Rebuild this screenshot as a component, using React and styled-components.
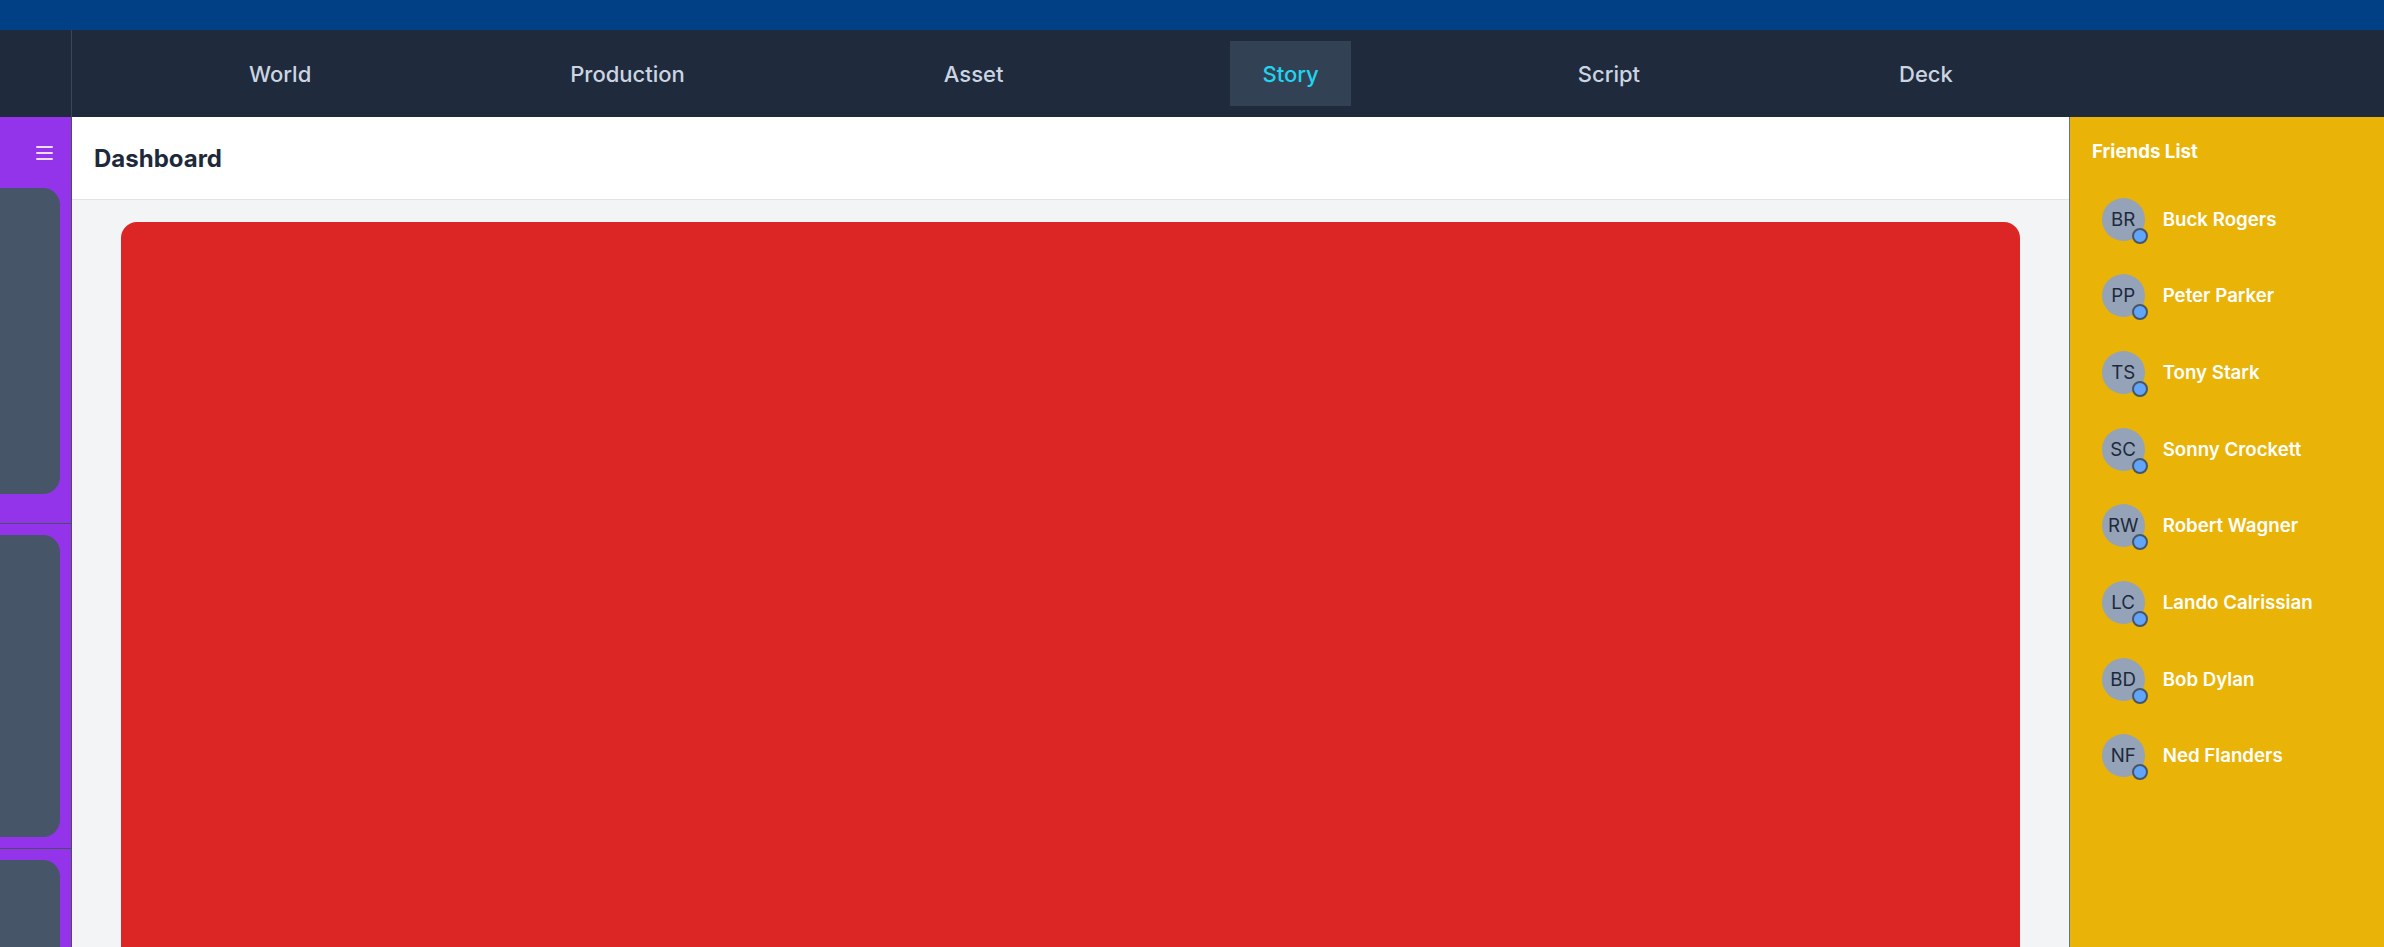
import styled, { createGlobalStyle } from "styled-components";

const GlobalStyle = createGlobalStyle`
  html, body {
    margin: 0;
    padding: 0;
    height: 100%;
  }
  body {
    font-family: Inter, "Noto Sans", "Liberation Sans", sans-serif;
    overflow: hidden;
  }
  #root {
    height: 100%;
  }
  * {
    box-sizing: border-box;
  }
`;

const tabs = ["World", "Production", "Asset", "Story", "Script", "Deck"];

const friends = [
  { initials: "BR", name: "Buck Rogers" },
  { initials: "PP", name: "Peter Parker" },
  { initials: "TS", name: "Tony Stark" },
  { initials: "SC", name: "Sonny Crockett" },
  { initials: "RW", name: "Robert Wagner" },
  { initials: "LC", name: "Lando Calrissian" },
  { initials: "BD", name: "Bob Dylan" },
  { initials: "NF", name: "Ned Flanders" },
];

const App = () => {
  return (
    <>
      <GlobalStyle />
      <Page>
        <TopStrip />
        <NavBar>
          <NavCorner />
          <NavLinks>
            {tabs.map((t) => (
              <NavLink key={t} $active={t === "Story"}>
                {t}
              </NavLink>
            ))}
          </NavLinks>
        </NavBar>
        <Body>
          <Sidebar>
            <SidebarHead>
              <MenuIcon width="17" height="14" viewBox="0 0 17 14">
                <rect x="0" y="0" width="17" height="2" rx="1" />
                <rect x="0" y="6" width="17" height="2" rx="1" />
                <rect x="0" y="12" width="17" height="2" rx="1" />
              </MenuIcon>
            </SidebarHead>
            <Section $top="0px" $bottom="29px">
              <Card $h="306px" />
            </Section>
            <Section $top="11px" $bottom="11px">
              <Card $h="302px" />
            </Section>
            <Section $top="11px" $bottom="11px" $last>
              <Card $h="302px" />
            </Section>
          </Sidebar>
          <Main>
            <Header>
              <Title>Dashboard</Title>
            </Header>
            <Content>
              <RedPanel />
            </Content>
          </Main>
          <Friends>
            <FriendsTitle>Friends List</FriendsTitle>
            <FriendList>
              {friends.map((f) => (
                <FriendRow key={f.initials}>
                  <Avatar>
                    {f.initials}
                    <Status />
                  </Avatar>
                  <FriendName>{f.name}</FriendName>
                </FriendRow>
              ))}
            </FriendList>
          </Friends>
        </Body>
      </Page>
    </>
  );
};

export default App;

const Page = styled.div`
  height: 100vh;
  display: flex;
  flex-direction: column;
`;

const TopStrip = styled.div`
  height: 30px;
  background: #014084;
  flex-shrink: 0;
`;

const NavBar = styled.nav`
  height: 87px;
  background: #1f2a3c;
  display: flex;
  flex-shrink: 0;
`;

const NavCorner = styled.div`
  width: 72px;
  border-right: 1px solid #3b4556;
`;

const NavLinks = styled.div`
  display: flex;
  align-items: center;
  gap: 195px;
  padding-left: 145px;
`;

const NavLink = styled.div`
  height: 65px;
  padding: 0 32px;
  display: flex;
  align-items: center;
  font-size: 22px;
  font-weight: 500;
  color: ${(p) => (p.$active ? "#22d3ee" : "#cbd5e1")};
  background: ${(p) => (p.$active ? "#334155" : "transparent")};
`;

const Body = styled.div`
  flex: 1;
  display: flex;
  min-height: 0;
`;

const Sidebar = styled.aside`
  width: 72px;
  flex-shrink: 0;
  background: #9333ea;
  border-right: 1px solid #4b4f66;
  overflow: hidden;
`;

const SidebarHead = styled.div`
  height: 71px;
  display: flex;
  align-items: center;
  justify-content: flex-end;
  padding-right: 18px;
`;

const MenuIcon = styled.svg`
  fill: #eddcfb;
`;

const Section = styled.div`
  padding: ${(p) => p.$top} 11px ${(p) => p.$bottom} 0;
  border-bottom: ${(p) => (p.$last ? "none" : "1px solid #4b4f66")};
`;

const Card = styled.div`
  height: ${(p) => p.$h};
  margin-left: -40px;
  background: #475569;
  border-radius: 17px;
`;

const Main = styled.main`
  flex: 1;
  display: flex;
  flex-direction: column;
  background: #f3f4f6;
  min-width: 0;
`;

const Header = styled.header`
  height: 83px;
  background: #ffffff;
  border-bottom: 1px solid #e2e4e8;
  display: flex;
  align-items: center;
  padding: 0 22px;
`;

const Title = styled.h1`
  margin: 0;
  font-size: 24px;
  font-weight: 700;
  color: #1e293b;
`;

const Content = styled.div`
  flex: 1;
  padding: 22px 49px 0;
  display: flex;
`;

const RedPanel = styled.div`
  flex: 1;
  background: #dc2626;
  border-radius: 16px 16px 0 0;
`;

const Friends = styled.aside`
  width: 315px;
  flex-shrink: 0;
  background: #eab308;
  border-left: 1px solid #64748b;
  padding: 21px 22px;
`;

const FriendsTitle = styled.h2`
  margin: 0 0 22px;
  font-size: 18.7px;
  line-height: 27px;
  font-weight: 700;
  color: #ffffff;
`;

const FriendList = styled.ul`
  list-style: none;
  margin: 0;
  padding: 0;
  display: flex;
  flex-direction: column;
  gap: 12.3px;
`;

const FriendRow = styled.li`
  display: flex;
  align-items: center;
  gap: 18px;
  padding: 10.7px 10.7px 10.7px 9.7px;
`;

const Avatar = styled.div`
  position: relative;
  width: 43px;
  height: 43px;
  border-radius: 50%;
  background: #94a3b8;
  color: #1e293b;
  font-size: 18.7px;
  display: flex;
  align-items: center;
  justify-content: center;
  flex-shrink: 0;
`;

const Status = styled.span`
  position: absolute;
  right: -3px;
  bottom: -3px;
  width: 16px;
  height: 16px;
  border-radius: 50%;
  background: #60a5fa;
  border: 2px solid #475569;
`;

const FriendName = styled.span`
  font-size: 18.7px;
  font-weight: 600;
  color: #ffffff;
`;
